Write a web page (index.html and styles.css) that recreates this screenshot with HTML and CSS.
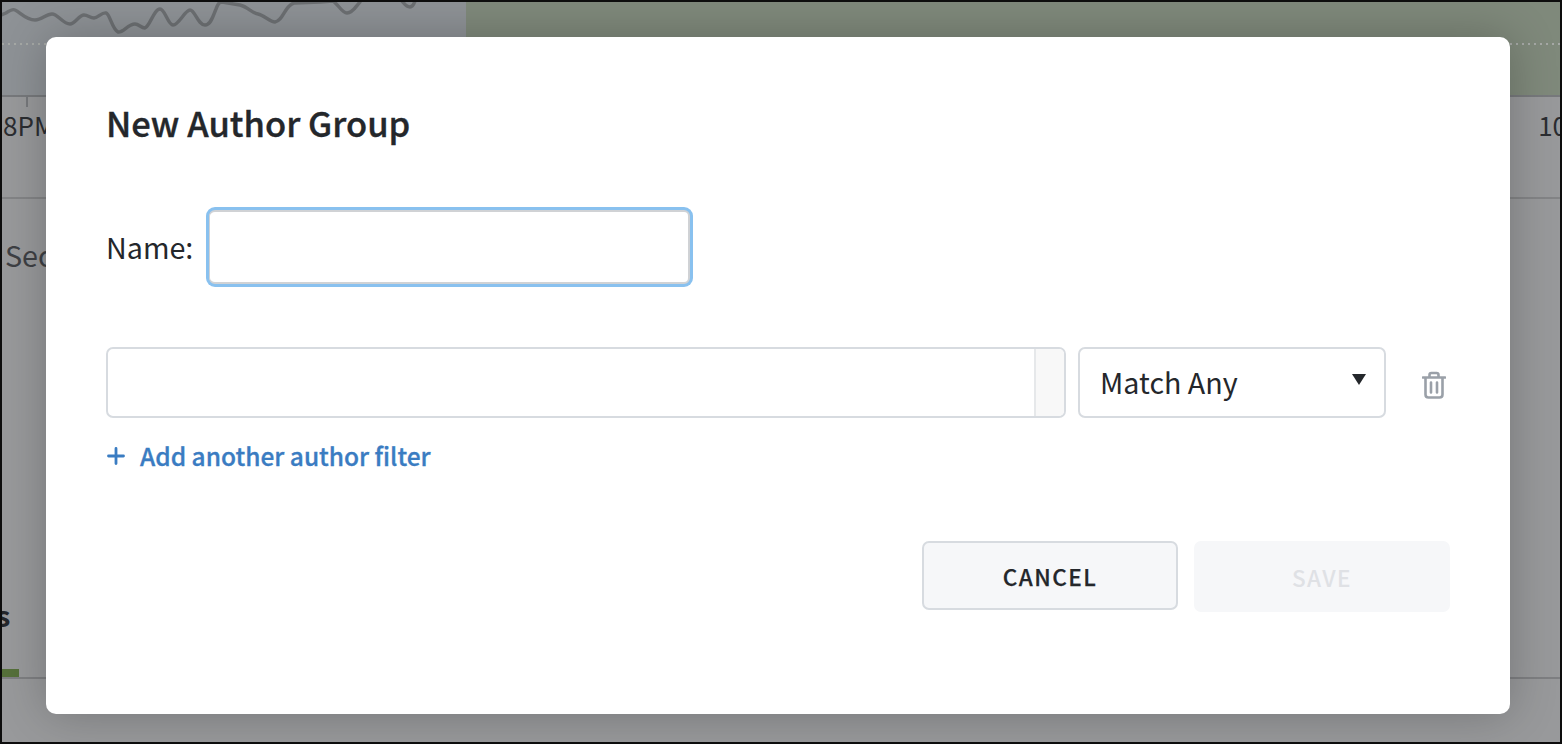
FILE: index.html
```html
<!DOCTYPE html>
<html lang="en">
<head>
<meta charset="utf-8">
<title>New Author Group</title>
<link rel="stylesheet" href="styles.css">
</head>
<body>
<div class="page">
  <section class="chart">
    <div class="plot">
      <svg class="wave" width="464" height="42" viewBox="2 2 464 42" aria-hidden="true">
        <path d="M1 15 L6 13 C9 11 13 9 15 10 C20 12 26 20 35 20 C42 20 46 14 52 14 C58 14 63 24 70 24 C75 24 79 15 84 15 C88 15 90 18 94 18 C98 18 102 12 106 13 C110 14 112 29 118 32 C123 33 128 24 135 24 C139 24 141 28 145 28 C150 26 154 9 160 9 C165 9 168 25 173 25 C179 25 185 10 190 10 C195 10 198 25 205 25 C211 25 213 16 216 9 C218 4 219 2 222 2 L240 5 C248 7 252 13 258 14 C264 15 270 22 275 22 C283 21 285 5 294 3 L320 2 L333 1 C338 4 342 13 347 13 C353 13 356 6 360 2 M401 0 C404 3 406 7 410 7 C413 7 414 4 415 1"></path>
      </svg>
      <div class="dots dots-a"></div>
      <div class="green"><div class="dots"></div></div>
    </div>
    <div class="axis">
      <span class="tick"></span>
      <span class="axis-label">8PM</span>
      <span class="axis-label">10</span>
    </div>
  </section>
  <section class="under">
    <div class="sec">Sec</div>
    <div class="tail">
      <div class="tail-s">s</div>
      <div class="bar"></div>
    </div>
  </section>

  <div class="modal" role="dialog" aria-label="New Author Group">
    <h1 class="title">New Author Group</h1>
    <div class="name-row">
      <label class="name-label">Name:</label>
      <div class="name-input"></div>
    </div>
    <div class="filter-row">
      <div class="filter-input"><span class="filter-end"></span></div>
      <div class="select">
        <span class="select-text">Match Any</span>
        <span class="caret"></span>
      </div>
      <svg class="trash" width="24" height="28" viewBox="0 0 24 28" aria-hidden="true">
        <path d="M1 6.5 H23 M7.5 6 V3.8 C7.5 2.6 8.2 2 9.4 2 H14.6 C15.8 2 16.5 2.6 16.5 3.8 V6 M3.5 7 V23.5 C3.5 25.4 4.6 26.5 6.5 26.5 H17.5 C19.4 26.5 20.5 25.4 20.5 23.5 V7" fill="none"></path>
        <path d="M9 11.5 V21.5 M15 11.5 V21.5" fill="none"></path>
      </svg>
    </div>
    <div class="add-row">
      <svg class="plus" width="18" height="18" viewBox="0 0 18 18" aria-hidden="true"><path d="M9 1.5 V16.5 M1.5 9 H16.5"></path></svg>
      <span>Add another author filter</span>
    </div>
    <div class="actions">
      <button class="btn cancel" type="button">CANCEL</button>
      <button class="btn save" type="button">SAVE</button>
    </div>
  </div>
</div>
</body>
</html>
```

FILE: styles.css
```css
* { box-sizing: border-box; }
html, body { margin: 0; height: 100%; }
body {
  font-family: "Noto Sans CJK JP", "Noto Sans", sans-serif;
  color: #24272b;
  background: #000;
  overflow: hidden;
}
.page {
  position: relative;
  width: 1562px;
  height: 744px;
  border: 2px solid #0d0d0d;
  background: #98999b;
  overflow: hidden;
}
.chart { height: 197px; border-bottom: 2px solid #838486; display: flex; flex-direction: column; }
.plot {
  height: 95px;
  flex: none;
  display: flex;
  position: relative;
  background: #8e9296;
  border-bottom: 2px solid #77797c;
}
.wave { flex: 0 0 464px; width: 464px; }
.wave path { fill: none; stroke: #6c6f72; stroke-width: 3.4; stroke-linecap: round; stroke-linejoin: round; }
.green { flex: 1; background: #7f897b; position: relative; }
.dots {
  position: absolute;
  left: 0;
  right: 0;
  top: 41px;
  height: 2px;
  background: repeating-linear-gradient(90deg, #a6a9a6 0 2px, transparent 2px 6px);
}
.dots-a { right: auto; width: 464px; }
.axis { position: relative; flex: 1; display: flex; justify-content: space-between; padding: 10px 0 0 1px; }
.tick { position: absolute; left: 24px; top: 0; width: 2px; height: 10px; background: #77797c; }
.axis-label { font-size: 26px; line-height: 36px; color: #2b2d31; }
.axis-label:last-child { margin-right: -7px; }
.under { height: 543px; position: relative; display: flex; flex-direction: column; }
.sec { font-size: 28.7px; line-height: 36px; color: #3e4044; margin: 38px 0 0 3px; }
.tail { margin-top: 323px; border-bottom: 2px solid #7e7f82; }
.tail-s { font-size: 29px; line-height: 36px; font-weight: 700; color: #24272b; margin-left: -6px; }
.bar { width: 17px; height: 8px; margin-top: 37px; background: #55703a; }

.modal {
  position: absolute;
  left: 44px;
  top: 35px;
  width: 1464px;
  height: 677px;
  background: #fff;
  border-radius: 10px;
  padding: 60px 60px 0 60px;
  box-shadow: 0 0 48px rgba(0, 0, 0, .24);
  display: flex;
  flex-direction: column;
}
.title { margin: 0; font-size: 34.5px; line-height: 50px; font-weight: 500; color: #24272b; -webkit-text-stroke: .35px #24272b; }
.name-row { display: flex; align-items: center; margin-top: 63px; }
.name-label { font-size: 28.7px; line-height: 40px; margin-right: 16px; }
.name-input {
  width: 481px;
  height: 74px;
  border: 2px solid #d0d2d5;
  border-left-width: 1px;
  border-radius: 6px;
  box-shadow: 0 0 0 3px #89c1ef;
  background: #fff;
}
.filter-row { display: flex; align-items: center; margin-top: 63px; }
.filter-input {
  width: 960px;
  height: 71px;
  border: 2px solid #d7dbe0;
  border-radius: 7px;
  display: flex;
  justify-content: flex-end;
  overflow: hidden;
}
.filter-end { width: 30px; background: #f8f8f8; border-left: 2px solid #e6e8ea; }
.select {
  width: 308px;
  height: 71px;
  margin-left: 12px;
  border: 2px solid #d7dbe0;
  border-radius: 7px;
  padding: 0 18px 0 20px;
  display: flex;
  align-items: center;
  justify-content: space-between;
  font-size: 28.7px;
  line-height: 40px;
  color: #24272b;
}
.select-text { margin-top: -2px; }
.caret {
  width: 0; height: 0;
  border-left: 7.5px solid transparent;
  border-right: 7.5px solid transparent;
  border-top: 11px solid #24272b;
  margin-top: -6px;
}
.trash { margin-left: 36px; margin-top: 5px; }
.trash path { stroke: #9aa0a8; stroke-width: 2.6; stroke-linecap: round; }
.add-row {
  display: flex;
  align-items: center;
  margin-top: 19px;
  margin-left: 1px;
  color: #3a7cc2;
  font-size: 24.5px;
  line-height: 38px;
  font-weight: 500;
  -webkit-text-stroke: .3px #3a7cc2;
}
.plus { margin-right: 15px; flex: none; }
.plus path { stroke: #3a7cc2; stroke-width: 2.8; stroke-linecap: round; fill: none; }
.actions { display: flex; justify-content: flex-end; gap: 16px; margin-top: 66px; align-items: flex-start; }
.btn {
  width: 256px;
  font-family: inherit;
  font-size: 22.5px;
  font-weight: 500;
  letter-spacing: 1.5px;
  border-radius: 7px;
  padding: 0;
}
.cancel { height: 69px; background: #f6f7f9; border: 2px solid #d7dbe0; color: #24272b; -webkit-text-stroke: .25px #24272b; }
.save { height: 71px; background: #f6f7f9; border: 0; color: #dfe1e5; }
```
